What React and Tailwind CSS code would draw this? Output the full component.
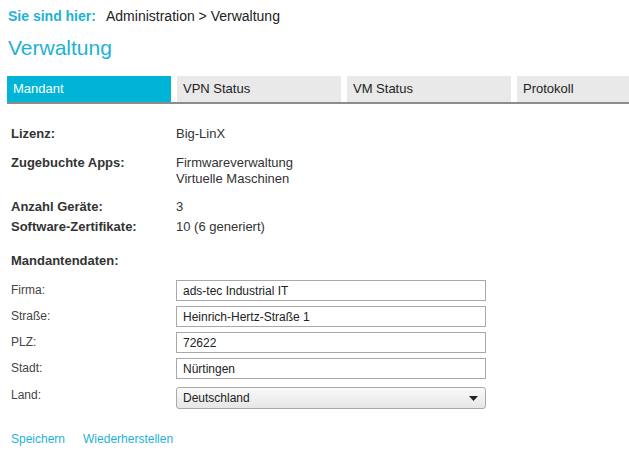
import { useState } from 'react';

const tabs = ['Mandant', 'VPN Status', 'VM Status', 'Protokoll'];

// Stammdaten des Mandanten
const fields = [
  { label: 'Firma:', value: 'ads-tec Industrial IT' },
  { label: 'Straße:', value: 'Heinrich-Hertz-Straße 1' },
  { label: 'PLZ:', value: '72622' },
  { label: 'Stadt:', value: 'Nürtingen' },
];

export default function App() {
  const [active, setActive] = useState(0);
  const [land, setLand] = useState('Deutschland');

  return (
    <div className="w-[629px] h-[454px] bg-white text-[13px] text-[#333] font-['Liberation_Sans',Arial,sans-serif] overflow-hidden">
      <div className="flex items-baseline pl-2 pt-[6px] h-[22px] text-[14px]">
        <span className="font-bold text-[#1eb2d6] w-[98px]">Sie sind hier:</span>
        <span className="text-[#222]">Administration &gt; Verwaltung</span>
      </div>

      <h1 className="pl-2 mt-[14px] text-[21px] leading-[24px] text-[#1eb2d6]">Verwaltung</h1>

      <div className="flex gap-[6px] ml-[7px] mt-[16px] border-b-2 border-[#8c8c8c]">
        {tabs.map((t, i) => (
          <button
            key={t}
            onClick={() => setActive(i)}
            className={
              'h-[26px] text-left pl-[6px] text-[13px] ' +
              (i === 3 ? 'flex-1 ' : 'w-[164px] ') +
              (active === i ? 'bg-[#00b4d8] text-white' : 'bg-[#e9e9e9] text-[#222]')
            }
          >
            {t}
          </button>
        ))}
      </div>

      <div className="pl-[11px] pt-[22px]">
        <div className="grid grid-cols-[165px_1fr] font-bold leading-[16px]">
          <span>Lizenz:</span>
          <span className="font-normal">Big-LinX</span>
        </div>
        <div className="grid grid-cols-[165px_1fr] font-bold leading-[16px] mt-[13px]">
          <span>Zugebuchte Apps:</span>
          <span className="font-normal">
            Firmwareverwaltung
            <br />
            Virtuelle Maschinen
          </span>
        </div>
        <div className="grid grid-cols-[165px_1fr] font-bold leading-[16px] mt-[12px]">
          <span>Anzahl Geräte:</span>
          <span className="font-normal">3</span>
        </div>
        <div className="grid grid-cols-[165px_1fr] font-bold leading-[16px] mt-[4px]">
          <span>Software-Zertifikate:</span>
          <span className="font-normal">10 (6 generiert)</span>
        </div>

        <div className="font-bold leading-[16px] mt-[18px]">Mandantendaten:</div>

        <div className="flex flex-col gap-[5px] mt-[11px]">
          {fields.map((f) => (
            <div key={f.label} className="grid grid-cols-[165px_310px] items-start">
              <span className="text-[12px] leading-[14px] pt-[3px] text-[#444]">{f.label}</span>
              <input
                defaultValue={f.value}
                className="h-[21px] border border-[#a9a9a9] px-[6px] text-[12px] text-[#222] outline-none"
              />
            </div>
          ))}
          <div className="grid grid-cols-[165px_310px] items-start mt-[3px]">
            <span className="text-[12px] leading-[14px] pt-[1px] text-[#444]">Land:</span>
            <div className="relative h-[22px]">
              <select
                value={land}
                onChange={(e) => setLand(e.target.value)}
                className="appearance-none w-full h-full border border-[#a9a9a9] rounded-[3px] pl-[6px] text-[12px] text-[#222] bg-gradient-to-b from-[#fafafa] to-[#e6e6e6] outline-none"
              >
                <option>Deutschland</option>
                <option>Österreich</option>
                <option>Schweiz</option>
              </select>
              <svg className="absolute right-[8px] top-[9px] pointer-events-none" width="9" height="5" viewBox="0 0 9 5">
                <path d="M0 0h9L4.5 5z" fill="#222" />
              </svg>
            </div>
          </div>
        </div>

        <div className="flex gap-[18px] mt-[21px] text-[#1eb2d6] text-[12px]">
          <a href="#" className="">Speichern</a>
          <a href="#" className="">Wiederherstellen</a>
        </div>
      </div>
    </div>
  );
}
